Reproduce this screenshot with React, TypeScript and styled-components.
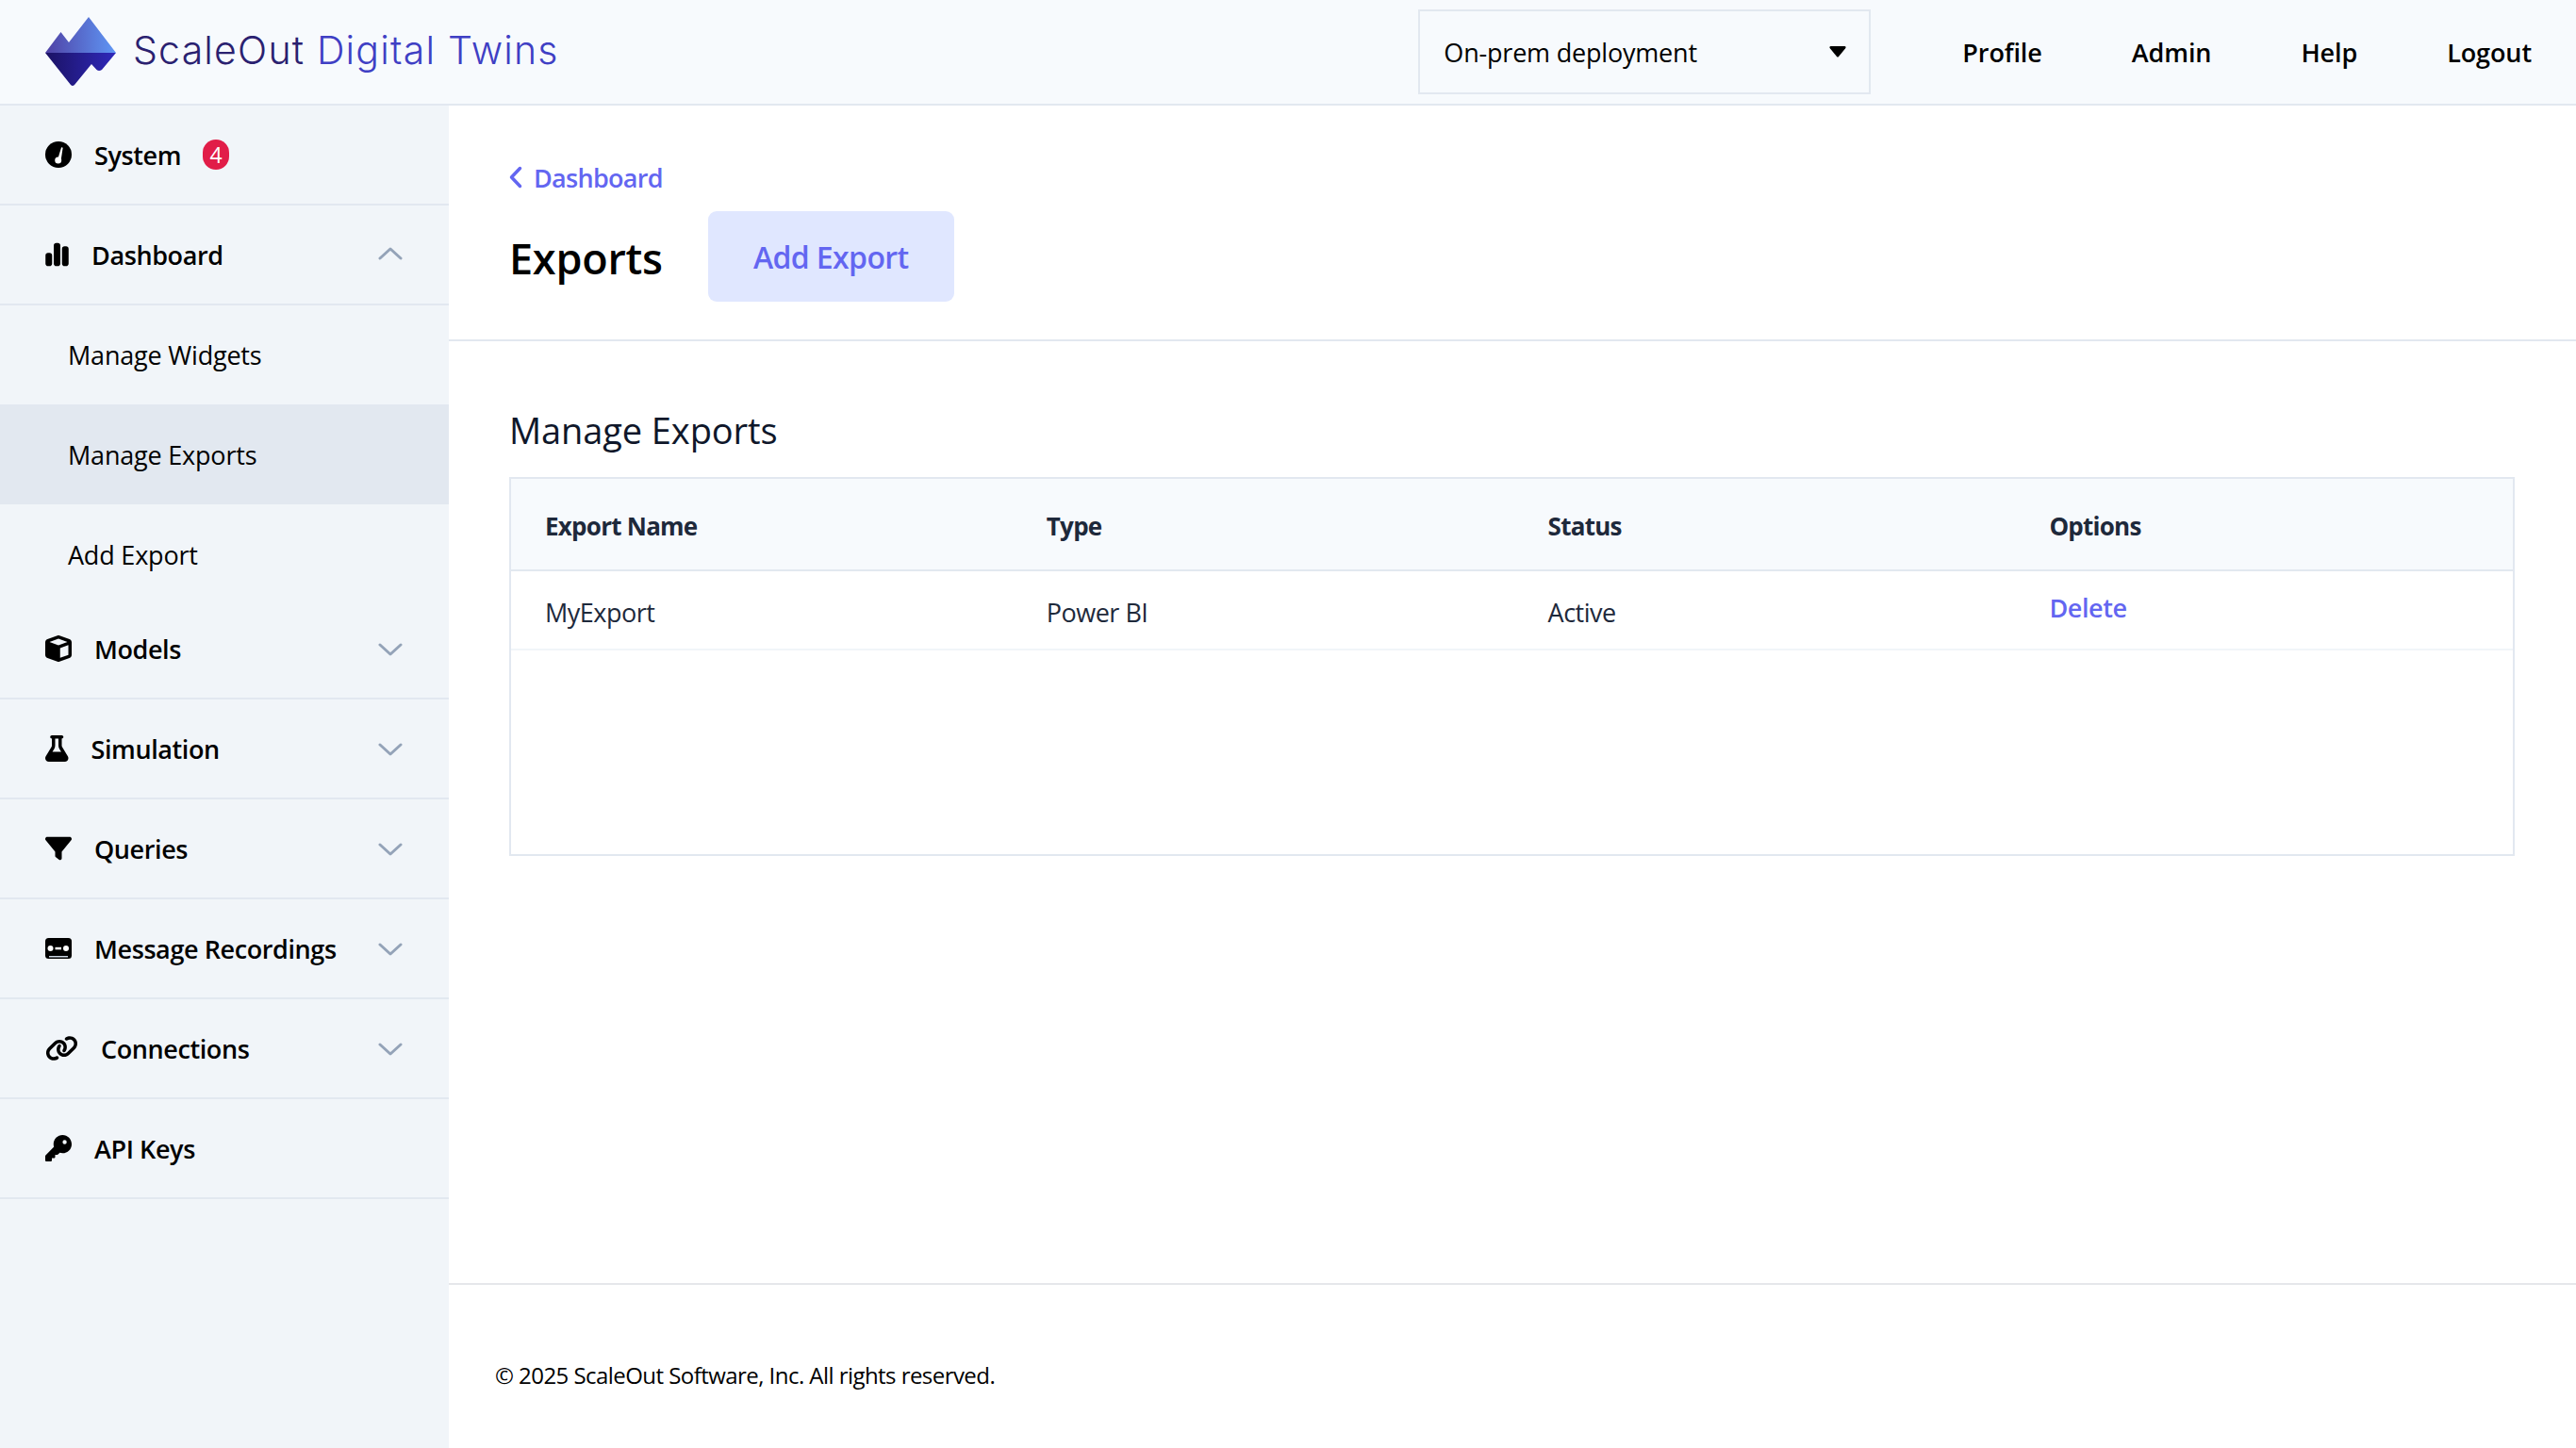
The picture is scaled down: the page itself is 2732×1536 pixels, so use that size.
import React from "react";
import styled, { createGlobalStyle } from "styled-components";
import {
  FaChartSimple,
  FaCube,
  FaFilter,
  FaFlask,
  FaKey,
  FaLink,
} from "react-icons/fa6";

const GlobalStyle = createGlobalStyle`
  * {
    box-sizing: border-box;
  }

  body {
    margin: 0;
    background-color: #fff;
    color: #000;
    font-family: "Open Sans", "Noto Sans", "Liberation Sans", sans-serif;
  }
`;

const Page = styled.div`
  width: 2732px;
  height: 1536px;
  display: grid;
  grid-template-rows: 112px 1fr;
  overflow: hidden;
`;

const TopBar = styled.header`
  display: flex;
  align-items: center;
  justify-content: space-between;
  padding-left: 48px;
  background-color: #f7fafd;
  border-bottom: 2px solid #e2e8f0;
`;

const Brand = styled.div`
  display: flex;
  align-items: center;
  gap: 18px;
  font-family: "Inter", sans-serif;
  font-size: 41px;
  font-weight: 300;
  letter-spacing: 1.2px;
  color: #2a2170;

  div {
    margin-top: -4px;
  }

  span {
    color: #3f3fc4;
  }
`;

const TopRight = styled.div`
  display: flex;
  align-items: center;
`;

const DeploymentSelect = styled.div`
  width: 480px;
  height: 90px;
  margin-right: 97px;
  padding: 0 24px 0 25px;
  display: flex;
  align-items: center;
  justify-content: space-between;
  border: 2px solid #e2e8f0;
  font-size: 27px;
  letter-spacing: -0.2px;
`;

const TopNav = styled.nav`
  display: flex;
  gap: 95px;
  padding-right: 47px;

  a {
    font-size: 27px;
    font-weight: 600;
    letter-spacing: -0.1px;
    color: #000;
    text-decoration: none;
  }
`;

const Body = styled.div`
  display: grid;
  grid-template-columns: 476px 1fr;
  min-height: 0;
`;

const Sidebar = styled.aside`
  background-color: #f1f5f9;
`;

const NavRow = styled.div`
  height: 106px;
  padding: 0 49px 0 48px;
  display: flex;
  align-items: center;
  border-bottom: 2px solid #e2e8f0;
`;

const IconSlot = styled.span<{ $w?: number }>`
  display: flex;
  align-items: center;
  margin-right: 24px;
  font-size: 28px;
  color: #000;

  svg {
    ${(p) => (p.$w ? `width: ${p.$w}px; height: 28px;` : "")}
  }
`;

const NavLabel = styled.span`
  font-size: 27px;
  font-weight: 600;
  letter-spacing: -0.4px;
  color: #000;
`;

const Badge = styled.span`
  width: 28px;
  height: 32px;
  margin-left: 23px;
  display: flex;
  align-items: center;
  justify-content: center;
  border-radius: 14px;
  background-color: #e11d48;
  color: #fff;
  font-size: 23px;
`;

const Chevron = styled.svg`
  margin-left: auto;
  width: 26px;
  height: 16px;
  fill: none;
  stroke: #94a3b8;
  stroke-width: 3;
  stroke-linecap: round;
  stroke-linejoin: round;
`;

const SubGroup = styled.div`
  margin-top: -1px;
`;

const SubRow = styled.div<{ $active?: boolean; $last?: boolean }>`
  height: ${(p) => (p.$last ? 101 : 106)}px;
  padding: ${(p) => (p.$last ? "6px" : "0")} 0 0 72px;
  display: flex;
  align-items: center;
  font-size: 27px;
  letter-spacing: -0.2px;
  background-color: ${(p) => (p.$active ? "#e2e8f0" : "transparent")};
`;

const Main = styled.main`
  display: flex;
  flex-direction: column;
  min-width: 0;
`;

const PageHead = styled.div`
  padding: 55px 64px 40px;
  border-bottom: 2px solid #e2e8f0;
`;

const BackLink = styled.a`
  height: 42px;
  margin-bottom: 15px;
  display: flex;
  align-items: center;
  gap: 12px;
  font-size: 27px;
  font-weight: 600;
  letter-spacing: -0.7px;
  color: #6366f1;

  svg {
    width: 14px;
    height: 24px;
    fill: none;
    stroke: #6366f1;
    stroke-width: 3.5;
    stroke-linecap: round;
    stroke-linejoin: round;
  }
`;

const TitleRow = styled.div`
  display: flex;
  align-items: center;
  gap: 48px;
`;

const Title = styled.h1`
  margin: 0;
  padding-top: 2px;
  font-size: 45px;
  font-weight: 600;
  letter-spacing: -0.25px;
  color: #000;
`;

const AddButton = styled.button`
  width: 261px;
  height: 96px;
  border: 0;
  border-radius: 9px;
  background-color: #e0e7ff;
  color: #6366f1;
  font-family: inherit;
  font-size: 32px;
  font-weight: 600;
  letter-spacing: -0.6px;
`;

const Section = styled.section`
  padding: 66px 65px 0 64px;
`;

const SectionTitle = styled.h2`
  margin: 0 0 22px;
  font-size: 38px;
  line-height: 56px;
  font-weight: 400;
  letter-spacing: -0.1px;
  color: #0f172a;
`;

const TableBox = styled.div`
  height: 402px;
  border: 2px solid #e2e8f0;
`;

const ExportsTable = styled.table`
  width: 100%;
  border-collapse: collapse;
  table-layout: fixed;
  color: #1e293b;
`;

const HeadCell = styled.th`
  width: 531.8px;
  height: 97px;
  padding: 3px 0 0 36px;
  text-align: left;
  font-size: 26px;
  font-weight: 700;
  letter-spacing: -0.75px;
  background-color: #f7fafd;
  border-bottom: 2px solid #e2e8f0;

  &:last-child {
    width: auto;
  }
`;

const Cell = styled.td`
  height: 84px;
  padding: 4px 0 0 36px;
  font-size: 27px;
  letter-spacing: -0.5px;
  border-bottom: 2px solid #f1f5f9;
`;

const DeleteLink = styled.a`
  display: block;
  margin-top: -10px;
  font-weight: 600;
  letter-spacing: -0.4px;
  color: #6366f1;
`;

const Footer = styled.footer`
  margin-top: auto;
  height: 175px;
  padding: 78px 0 0 49px;
  border-top: 2px solid #e5e7eb;
  font-size: 24px;
  line-height: 36px;
  letter-spacing: -0.55px;
  color: #000;
`;

const Logo = () => (
  <svg width="75" height="74" viewBox="0 0 75 74">
    <defs>
      <linearGradient id="logoTop" x1="0" y1="0" x2="1" y2="0">
        <stop offset="0" stopColor="#4f41a5" />
        <stop offset="1" stopColor="#5f97f5" />
      </linearGradient>
      <linearGradient id="logoBottom" x1="0" y1="0" x2="1" y2="0">
        <stop offset="0" stopColor="#1b1264" />
        <stop offset="1" stopColor="#2f29bb" />
      </linearGradient>
    </defs>
    <path d="M0 38 L16.5 16 L25 27 L46 0 L75 38 Z" fill="url(#logoTop)" />
    <path
      d="M0 38 H75 L60 56 Q57 58 54.500 56 L49 50 L31 72 Q29 74 27 72 Z"
      fill="url(#logoBottom)"
    />
  </svg>
);

const GaugeIcon = () => (
  <svg width="28" height="28" viewBox="0 0 28 28">
    <circle cx="14" cy="14" r="14" fill="#000" />
    <path d="M13.500 18 L17 6.500 Q18.300 5.800 18.600 7 L16.800 19 Z" fill="#fff" />
    <circle cx="13.700" cy="20" r="3.500" fill="#fff" />
  </svg>
);

const TapeIcon = () => (
  <svg width="28" height="22" viewBox="0 0 28 22">
    <rect width="28" height="22" rx="3.500" fill="#000" />
    <circle cx="5.500" cy="11" r="3" fill="#fff" />
    <circle cx="22" cy="11" r="3" fill="#fff" />
    <rect x="10.500" y="9.800" width="6.500" height="2.500" fill="#fff" />
    <rect x="4" y="19" width="20" height="1.500" fill="#cbd5e1" />
  </svg>
);

const CaretIcon = () => (
  <svg width="18" height="12" viewBox="0 0 18 12">
    <path d="M1.500 0 H16.500 Q18.500 0.500 17 2.500 L10 11 Q9 12 8 11 L1 2.500 Q-0.500 0.500 1.500 0 Z" fill="#000" />
  </svg>
);

const ChevronDown = () => (
  <Chevron viewBox="0 0 26 16">
    <path d="M2 4 L13 14 L24 4" />
  </Chevron>
);

const ChevronUp = () => (
  <Chevron viewBox="0 0 26 16">
    <path d="M2 12 L13 2 L24 12" />
  </Chevron>
);

const App = () => {
  return (
    <Page>
      <GlobalStyle />
      <TopBar>
        <Brand>
          <Logo />
          <div>
            ScaleOut <span>Digital Twins</span>
          </div>
        </Brand>
        <TopRight>
          <DeploymentSelect>
            On-prem deployment
            <CaretIcon />
          </DeploymentSelect>
          <TopNav>
            <a href="#profile">Profile</a>
            <a href="#admin">Admin</a>
            <a href="#help">Help</a>
            <a href="#logout">Logout</a>
          </TopNav>
        </TopRight>
      </TopBar>
      <Body>
        <Sidebar>
          <NavRow>
            <IconSlot>
              <GaugeIcon />
            </IconSlot>
            <NavLabel>System</NavLabel>
            <Badge>4</Badge>
          </NavRow>
          <NavRow>
            <IconSlot $w={25}>
              <FaChartSimple />
            </IconSlot>
            <NavLabel>Dashboard</NavLabel>
            <ChevronUp />
          </NavRow>
          <SubGroup>
            <SubRow>Manage Widgets</SubRow>
            <SubRow $active>Manage Exports</SubRow>
            <SubRow $last>Add Export</SubRow>
          </SubGroup>
          <NavRow>
            <IconSlot $w={28}>
              <FaCube />
            </IconSlot>
            <NavLabel>Models</NavLabel>
            <ChevronDown />
          </NavRow>
          <NavRow>
            <IconSlot $w={24.5}>
              <FaFlask />
            </IconSlot>
            <NavLabel>Simulation</NavLabel>
            <ChevronDown />
          </NavRow>
          <NavRow>
            <IconSlot $w={28}>
              <FaFilter />
            </IconSlot>
            <NavLabel>Queries</NavLabel>
            <ChevronDown />
          </NavRow>
          <NavRow>
            <IconSlot>
              <TapeIcon />
            </IconSlot>
            <NavLabel>Message Recordings</NavLabel>
            <ChevronDown />
          </NavRow>
          <NavRow>
            <IconSlot $w={35}>
              <FaLink />
            </IconSlot>
            <NavLabel>Connections</NavLabel>
            <ChevronDown />
          </NavRow>
          <NavRow>
            <IconSlot $w={28}>
              <FaKey />
            </IconSlot>
            <NavLabel>API Keys</NavLabel>
          </NavRow>
        </Sidebar>
        <Main>
          <PageHead>
            <BackLink>
              <svg viewBox="0 0 14 24">
                <path d="M11.500 2.500 L2.500 12 L11.500 21.500" />
              </svg>
              Dashboard
            </BackLink>
            <TitleRow>
              <Title>Exports</Title>
              <AddButton>Add Export</AddButton>
            </TitleRow>
          </PageHead>
          <Section>
            <SectionTitle>Manage Exports</SectionTitle>
            <TableBox>
              <ExportsTable>
                <thead>
                  <tr>
                    <HeadCell>Export Name</HeadCell>
                    <HeadCell>Type</HeadCell>
                    <HeadCell>Status</HeadCell>
                    <HeadCell>Options</HeadCell>
                  </tr>
                </thead>
                <tbody>
                  <tr>
                    <Cell>MyExport</Cell>
                    <Cell>Power BI</Cell>
                    <Cell>Active</Cell>
                    <Cell>
                      <DeleteLink>Delete</DeleteLink>
                    </Cell>
                  </tr>
                </tbody>
              </ExportsTable>
            </TableBox>
          </Section>
          <Footer>© 2025 ScaleOut Software, Inc. All rights reserved.</Footer>
        </Main>
      </Body>
    </Page>
  );
};

export default App;
